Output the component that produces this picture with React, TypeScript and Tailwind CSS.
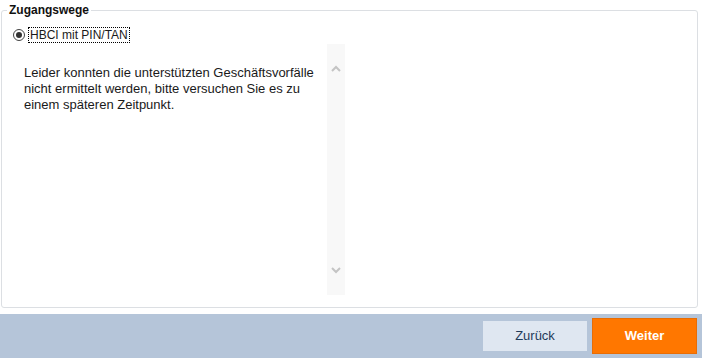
import React from 'react';

function Chevron({ up }: { up?: boolean }) {
  return (
    <svg width="10" height="7" viewBox="0 0 10 7" className="block">
      <polyline
        points={up ? '1,6 5,2 9,6' : '1,1 5,5 9,1'}
        fill="none"
        stroke="#c4c4c4"
        strokeWidth={2}
      />
    </svg>
  );
}

export default function App() {
  return (
    <div className="w-[702px] h-[358px] bg-white flex flex-col font-['Liberation_Sans',Arial,sans-serif] text-[#1a1a1a]">
      {/* ====== Zugangswege ====== */}
      <div className="pt-[3px] pl-[1px] pr-[4px]">
        <fieldset className="border border-[#dcdfe3] rounded-[3px] h-[305px]">
          <legend className="ml-[5px] px-[2px] text-[12px] leading-[14px] font-bold text-[#111]">
            Zugangswege
          </legend>
          <div className="flex items-center gap-[3px] pl-[11px] mt-[10px]">
            <span className="w-[12px] h-[12px] rounded-full border border-[#444] bg-white flex items-center justify-center">
              <span className="w-[6px] h-[6px] rounded-full bg-[#333]" />
            </span>
            <span className="text-[12px] leading-[14px] border border-dotted border-black px-[1px]">
              HBCI mit PIN/TAN
            </span>
          </div>
          <div className="flex mt-[1px]">
            <div className="w-[325px] pl-[22px] pt-[21px] text-[13px] leading-[16px]">
              Leider konnten die unterstützten Geschäftsvorfälle nicht ermittelt werden, bitte versuchen Sie es zu
              einem späteren Zeitpunkt.
            </div>
            <div className="w-[18px] h-[251px] bg-[#f8f8f8] flex flex-col items-center justify-between pt-[21px] pb-[21px]">
              <Chevron up />
              <Chevron />
            </div>
          </div>
        </fieldset>
      </div>

      {/* ====== Footer ====== */}
      <div className="mt-auto h-[44px] bg-[#b5c5d9] flex items-center justify-end gap-[5px] pr-[5px]">
        <button className="w-[104px] h-[30px] bg-[#dfe7f1] text-[13px] text-[#1f3b5a]">Zurück</button>
        <button className="w-[105px] h-[36px] bg-[#ff7700] border border-[#e86d05] text-[13px] font-bold text-white">
          Weiter
        </button>
      </div>
    </div>
  );
}
